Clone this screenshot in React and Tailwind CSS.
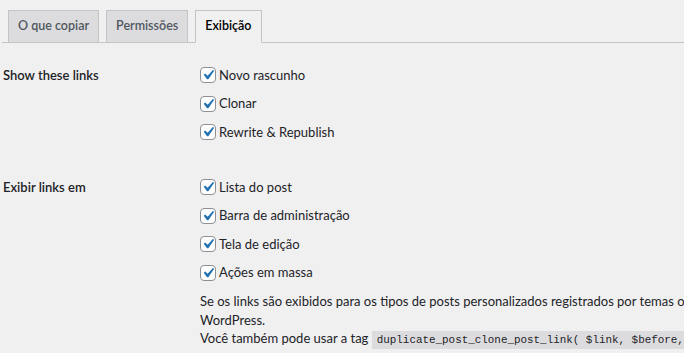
const tabs = [
  { label: "O que copiar", active: false },
  { label: "Permissões", active: false },
  { label: "Exibição", active: true },
]

const showLinks = ["Novo rascunho", "Clonar", "Rewrite & Republish"]
const whereLinks = [
  "Lista do post",
  "Barra de administração",
  "Tela de edição",
  "Ações em massa",
]

function Check({ label }) {
  return (
    <label className="flex h-[28.5px] items-center">
      <span className="relative h-4 w-4 shrink-0 rounded-[4px] border border-[#8c8f94] bg-white">
        <svg
          viewBox="0 0 20 20"
          className="absolute left-[-3px] top-[-3px] h-[20px] w-[20px] fill-[#2271b1]"
        >
          <path d="M14.83 4.89l1.34.94-5.81 8.38H9.02L5.78 9.67l1.34-1.25 2.57 2.4z" />
        </svg>
      </span>
      <span className="ml-[3px]">{label}</span>
    </label>
  )
}

export default function App() {
  return (
    <div className="min-h-screen overflow-hidden bg-[#f0f0f1] font-['Lato',sans-serif] text-[13px] text-[#1d2327]">
      <nav className="ml-[2px] flex h-[43px] items-end border-b border-[#c3c4c7] pl-[6px]">
        {tabs.map((tab) => (
          <div
            key={tab.label}
            className={`mr-[7px] -mb-px flex h-[33px] items-center border border-[#c3c4c7] px-[9px] text-[12.5px] font-semibold ${
              tab.active
                ? "border-b-[#f0f0f1] bg-[#f0f0f1] text-black"
                : "bg-[#dcdcde] text-[#50575e]"
            }`}
          >
            {tab.label}
          </div>
        ))}
      </nav>

      <div className="grid grid-cols-[197px_1fr] pl-[3px] pt-[18px]">
        <div className="flex h-[28.5px] items-center font-semibold">Show these links</div>
        <div>
          {showLinks.map((l) => (
            <Check key={l} label={l} />
          ))}
        </div>

        <div className="mt-[26.5px] flex h-[28.5px] items-center font-semibold">
          Exibir links em
        </div>
        <div className="mt-[26.5px]">
          {whereLinks.map((l) => (
            <Check key={l} label={l} />
          ))}
          <p className="mt-[5px] whitespace-nowrap leading-[18.5px]">
            Se os links são exibidos para os tipos de posts personalizados registrados por temas ou plugins depende do seu registro junto ao
            <br />
            WordPress.
            <br />
            Você também pode usar a tag{" "}
            <code className="bg-[#dcdcde] px-[5px] py-[3px] font-['Liberation_Mono',monospace] text-[10.9px]">
              duplicate_post_clone_post_link( $link, $before, $after, $id )
            </code>
          </p>
        </div>
      </div>
    </div>
  )
}
